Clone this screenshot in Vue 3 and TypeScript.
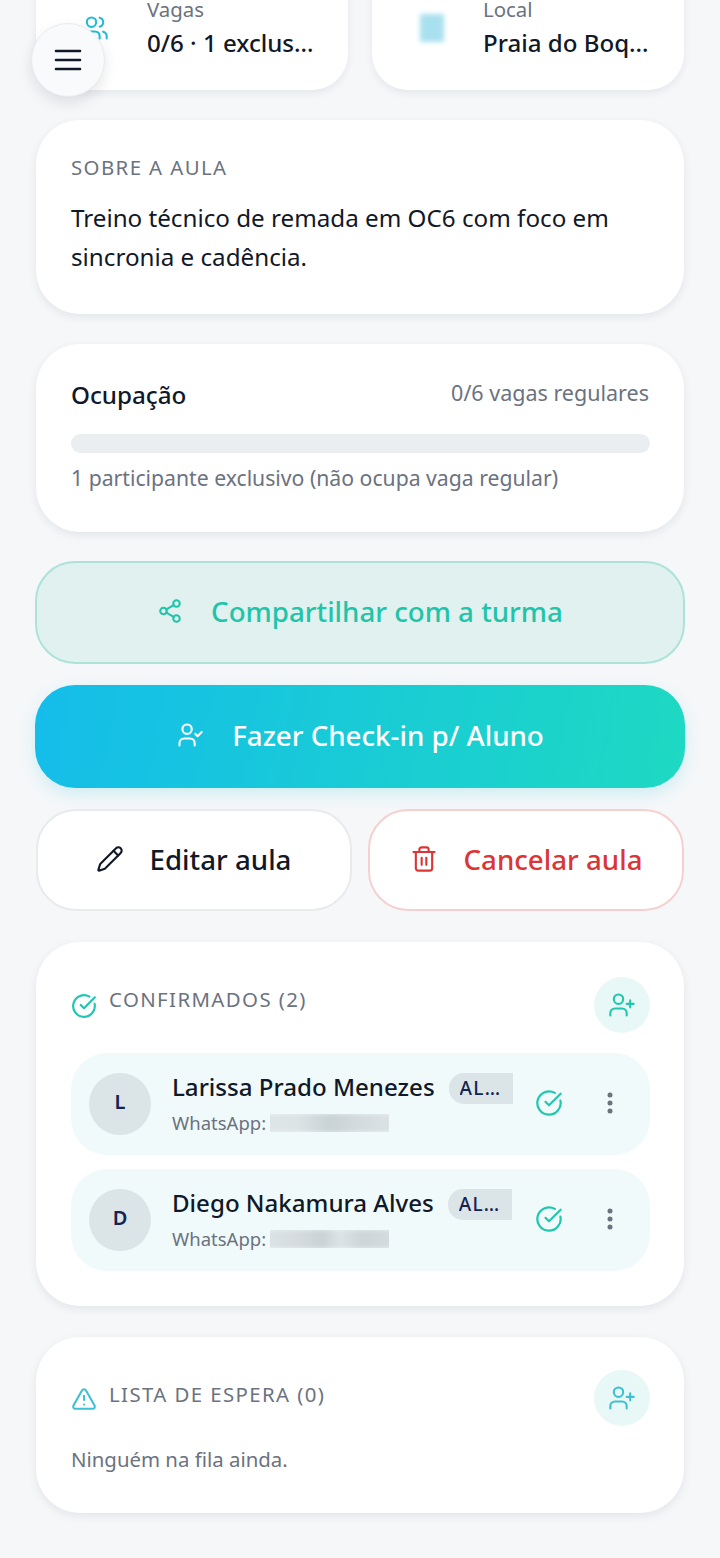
<script setup lang="ts">
interface Person { initial: string; name: string; blur: string }
const people: Person[] = [
  { initial: 'L', name: 'Larissa Prado Menezes', blur: 'linear-gradient(90deg,#dfe6e8 0%,#dde4e6 25%,#c9d2d5 50%,#d3dadd 70%,#dde4e6 100%)' },
  { initial: 'D', name: 'Diego Nakamura Alves', blur: 'linear-gradient(90deg,#dde4e6 0%,#d3dadd 30%,#c9d2d5 45%,#dde4e6 58%,#cdd5d8 75%,#d6dde0 100%)' },
]
</script>

<template>
  <div class="page">
    <button class="menu" aria-label="Menu">
      <svg width="28" height="28" viewBox="0 0 28 28" fill="none" stroke="#111827" stroke-width="2.6" stroke-linecap="round">
        <path d="M2 5h24M2 14h24M2 23h24" />
      </svg>
    </button>

    <div class="stats">
      <div class="stat">
        <div class="stat-icon">
          <svg width="28" height="28" viewBox="0 0 24 24" fill="none" stroke="#22bcd8" stroke-width="1.8" stroke-linecap="round" stroke-linejoin="round">
            <path d="M16 21v-2a4 4 0 0 0-4-4H6a4 4 0 0 0-4 4v2" />
            <circle cx="9" cy="7" r="4" />
            <path d="M22 21v-2a4 4 0 0 0-3-3.87" />
            <path d="M16 3.13a4 4 0 0 1 0 7.75" />
          </svg>
        </div>
        <div class="stat-text">
          <div class="stat-label">Vagas</div>
          <div class="stat-value">0/6 · 1 exclusivo</div>
        </div>
      </div>
      <div class="stat">
        <div class="stat-icon"><span class="thumb"></span></div>
        <div class="stat-text">
          <div class="stat-label">Local</div>
          <div class="stat-value">Praia do Boqueirão</div>
        </div>
      </div>
    </div>

    <section class="card about">
      <h2 class="eyebrow">SOBRE A AULA</h2>
      <p class="about-text">Treino técnico de remada em OC6 com foco em sincronia e cadência.</p>
    </section>

    <section class="card occupancy">
      <div class="occ-head">
        <span class="occ-title">Ocupação</span>
        <span class="occ-count">0/6 vagas regulares</span>
      </div>
      <div class="track"></div>
      <p class="occ-note">1 participante exclusivo (não ocupa vaga regular)</p>
    </section>

    <button class="btn share">
      <svg width="26" height="26" viewBox="0 0 24 24" fill="none" stroke="currentColor" stroke-width="1.9" stroke-linecap="round" stroke-linejoin="round">
        <circle cx="18" cy="5" r="3" /><circle cx="6" cy="12" r="3" /><circle cx="18" cy="19" r="3" />
        <path d="m8.59 13.51 6.83 3.98M15.41 6.51l-6.82 3.98" />
      </svg>
      <span>Compartilhar com a turma</span>
    </button>

    <button class="btn checkin">
      <svg width="28" height="28" viewBox="0 0 24 24" fill="none" stroke="currentColor" stroke-width="1.8" stroke-linecap="round" stroke-linejoin="round">
        <path d="M16 21v-2a4 4 0 0 0-4-4H7a4 4 0 0 0-4 4v2" /><circle cx="9.5" cy="7" r="4" /><path d="m16.5 11 2 2 3.5-3.5" />
      </svg>
      <span>Fazer Check-in p/ Aluno</span>
    </button>

    <div class="btn-row">
      <button class="btn edit">
        <svg width="28" height="28" viewBox="0 0 24 24" fill="none" stroke="currentColor" stroke-width="1.8" stroke-linecap="round" stroke-linejoin="round">
          <path d="M21.17 6.81a2.82 2.82 0 0 0-3.99-3.99L3.84 16.17a2 2 0 0 0-.5.83l-1.32 4.35a.5.5 0 0 0 .62.62l4.35-1.32a2 2 0 0 0 .83-.5z" /><path d="m15 5 4 4" />
        </svg>
        <span>Editar aula</span>
      </button>
      <button class="btn cancel">
        <svg width="28" height="28" viewBox="0 0 24 24" fill="none" stroke="currentColor" stroke-width="1.8" stroke-linecap="round" stroke-linejoin="round">
          <path d="M3 6h18M19 6v14a2 2 0 0 1-2 2H7a2 2 0 0 1-2-2V6M8 6V4a2 2 0 0 1 2-2h4a2 2 0 0 1 2 2v2M10 11v6M14 11v6" />
        </svg>
        <span>Cancelar aula</span>
      </button>
    </div>

    <section class="card confirmed">
      <div class="list-head">
        <svg class="head-icon" width="26" height="26" viewBox="0 0 24 24" fill="none" stroke="#1fc7ae" stroke-width="2" stroke-linecap="round" stroke-linejoin="round">
          <path d="M21.8 10A10 10 0 1 1 17 3.34" /><path d="m9 11 3 3L22 4" />
        </svg>
        <h2 class="eyebrow inline">CONFIRMADOS (2)</h2>
        <button class="add" aria-label="Adicionar">
          <svg width="28" height="28" viewBox="0 0 24 24" fill="none" stroke="#1fc7ae" stroke-width="1.8" stroke-linecap="round" stroke-linejoin="round">
            <path d="M16 21v-2a4 4 0 0 0-4-4H6a4 4 0 0 0-4 4v2" /><circle cx="9" cy="7" r="4" /><path d="M19 8v6M22 11h-6" />
          </svg>
        </button>
      </div>
      <div class="people">
        <div v-for="p in people" :key="p.initial" class="person">
          <div class="avatar">{{ p.initial }}</div>
          <div class="person-main">
            <div class="name-line">
              <span class="name">{{ p.name }}</span>
              <span class="tag"><span class="tag-in">ALUNO</span></span>
            </div>
            <div class="phone">
              <span>WhatsApp:</span>
              <span class="phone-clip"><span class="phone-blur" :style="{ background: p.blur }"></span></span>
            </div>
          </div>
          <svg class="check" width="28" height="28" viewBox="0 0 24 24" fill="none" stroke="#1fc7ae" stroke-width="1.9" stroke-linecap="round" stroke-linejoin="round">
            <path d="M21.8 10A10 10 0 1 1 17 3.34" /><path d="m9 11 3 3L22 4" />
          </svg>
          <svg class="more" width="6" height="22" viewBox="0 0 6 22" fill="#6b7280">
            <circle cx="3" cy="3" r="2.5" /><circle cx="3" cy="11" r="2.5" /><circle cx="3" cy="19" r="2.5" />
          </svg>
        </div>
      </div>
    </section>

    <section class="card waiting">
      <div class="list-head">
        <svg class="head-icon" width="26" height="26" viewBox="0 0 24 24" fill="none" stroke="#3cc0d2" stroke-width="1.9" stroke-linecap="round" stroke-linejoin="round">
          <path d="m21.73 18-8-14a2 2 0 0 0-3.48 0l-8 14A2 2 0 0 0 4 21h16a2 2 0 0 0 1.73-3" /><path d="M12 9v4M12 17h.01" />
        </svg>
        <h2 class="eyebrow inline">LISTA DE ESPERA (0)</h2>
        <button class="add" aria-label="Adicionar">
          <svg width="28" height="28" viewBox="0 0 24 24" fill="none" stroke="#3cc0d2" stroke-width="1.8" stroke-linecap="round" stroke-linejoin="round">
            <path d="M16 21v-2a4 4 0 0 0-4-4H6a4 4 0 0 0-4 4v2" /><circle cx="9" cy="7" r="4" /><path d="M19 8v6M22 11h-6" />
          </svg>
        </button>
      </div>
      <p class="empty">Ninguém na fila ainda.</p>
    </section>
  </div>
</template>

<style>
html, body { margin: 0; background: #f5f7f9; }
</style>

<style scoped>
* { box-sizing: border-box; }
.page {
  position: relative;
  width: 720px;
  height: 1558px;
  overflow: hidden;
  padding: 0 36px;
  background: #f5f7f9;
  font-family: "Noto Sans", sans-serif;
  color: #111827;
}
.menu {
  position: absolute;
  z-index: 1;
  left: 31px;
  top: 23px;
  width: 74px;
  height: 74px;
  border-radius: 50%;
  border: 1px solid #e8ebef;
  background: #f8fafb;
  box-shadow: 0 6px 14px rgba(17, 24, 39, .1);
  display: flex;
  align-items: center;
  justify-content: center;
  padding: 0;
}
.stats {
  display: grid;
  grid-template-columns: 312px 312px;
  grid-template-rows: 102px;
  gap: 24px;
  margin-top: -12px;
}
.stat {
  display: flex;
  align-items: flex-end;
  background: #fff;
  border-radius: 0 0 36px 36px;
  box-shadow: 0 3px 8px rgba(17, 24, 39, .07);
  padding: 0 33px 32px 36px;
  min-width: 0;
}
.stat-icon {
  width: 48px;
  margin-right: 27px;
  flex: none;
  display: flex;
  justify-content: center;
  align-self: flex-start;
  padding-top: 26px;
}
.stat:first-child .stat-icon svg { margin-left: -3px; }
.thumb {
  display: block;
  width: 24px;
  height: 28px;
  background: #a9e0ef;
  filter: blur(2.5px);
}
.stat-text { min-width: 0; flex: 1; }
.stat-label {
  font-size: 20.4px;
  line-height: 22px;
  color: #6b7280;
  margin-bottom: 8px;
}
.stat-value {
  font-size: 24.1px;
  line-height: 30px;
  font-weight: 500;
  white-space: nowrap;
  overflow: hidden;
  text-overflow: ellipsis;
}
.card {
  background: #fff;
  border-radius: 44px;
  box-shadow: 0 3px 10px rgba(17, 24, 39, .08);
  padding: 0 34px 0 35px;
}
.about { margin-top: 30px; height: 194px; padding-top: 33px; }
.eyebrow {
  margin: 0;
  font-size: 20.4px;
  line-height: 28px;
  font-weight: 450;
  letter-spacing: 1.4px;
  color: #6b7280;
}
.about-text {
  margin: 17px 0 0;
  font-size: 24.2px;
  line-height: 39px;
  color: #111827;
}
.occupancy { margin-top: 30px; height: 188px; padding-top: 33px; }
.occ-head { display: flex; justify-content: space-between; align-items: flex-start; }
.occ-title { font-size: 24.2px; line-height: 36px; font-weight: 500; }
.occ-count { font-size: 21.5px; line-height: 32px; color: #6b7280; margin-right: 1px; }
.track { margin-top: 21px; height: 19px; border-radius: 10px; background: #eaeef0; }
.occ-note { margin: 10px 0 0; font-size: 21.2px; line-height: 30px; color: #6b7280; }
.btn {
  display: flex;
  align-items: center;
  justify-content: center;
  gap: 28px;
  width: 100%;
  border-radius: 40px;
  font-family: inherit;
  font-size: 27.7px;
  font-weight: 500;
  padding: 0 0 3px;
}
.share {
  width: 650px;
  margin: 29px -1px 0;
  height: 103px;
  background: #e0f1ef;
  border: 2px solid #ace3d9;
  color: #1fc4a9;
}
.checkin {
  width: 650px;
  margin: 21px -1px 0;
  height: 103px;
  border: 0;
  color: #fff;
  background: linear-gradient(100deg, #14bdea 0%, #1ed9c2 100%);
  box-shadow: 0 6px 16px rgba(30, 200, 215, .18);
}
.btn-row { display: grid; grid-template-columns: 316px 316px; gap: 16px; margin-top: 21px; }
.edit, .cancel { height: 102px; background: #fff; gap: 26px; }
.edit { border: 2px solid #e8eaee; color: #111827; padding-left: 3px; }
.edit svg { margin-left: -4px; }
.cancel { border: 2px solid #f6d0d0; color: #dc3535; }
.confirmed { margin-top: 31px; height: 364px; padding-top: 35px; }
.list-head { display: flex; align-items: center; height: 56px; }
.head-icon { flex: none; margin-right: 12px; }
.confirmed .head-icon { margin-top: 2px; }
.confirmed .eyebrow.inline { margin-bottom: 12px; }
.waiting .head-icon { margin-top: 2px; }
.waiting .eyebrow.inline { margin-bottom: 8px; }
.eyebrow.inline { flex: 1; }
.add {
  width: 56px;
  height: 56px;
  flex: none;
  border: 0;
  padding: 0;
  border-radius: 50%;
  background: #e8f8f6;
  display: flex;
  align-items: center;
  justify-content: center;
}
.people { margin-top: 20px; display: flex; flex-direction: column; gap: 14px; }
.person {
  display: flex;
  align-items: center;
  height: 102px;
  padding: 0 37px 0 18px;
  border-radius: 36px;
  background: #f0fafa;
}
.avatar {
  width: 62px;
  height: 62px;
  flex: none;
  border-radius: 50%;
  background: #dbe4e7;
  color: #14234f;
  display: flex;
  align-items: center;
  justify-content: center;
  font-size: 20px;
  font-weight: 600;
  margin-right: 21px;
  padding-bottom: 5px;
}
.person-main { flex: 1; min-width: 0; }
.name-line { display: flex; align-items: center; gap: 14px; height: 32px; }
.name { font-size: 24.1px; line-height: 32px; font-weight: 500; white-space: nowrap; color: #111827; margin-top: -2px; }
.tag {
  width: 64px;
  height: 31px;
  flex: none;
  background: #dbe4e7;
  border-radius: 15px 0 0 15px;
  padding: 0 10px 0 11px;
  margin-top: 1px;
  display: flex;
  align-items: center;
  overflow: hidden;
}
.tag-in {
  display: block;
  width: 100%;
  font-size: 19px;
  font-weight: 500;
  letter-spacing: 1.3px;
  color: #14234f;
  white-space: nowrap;
  overflow: hidden;
  text-overflow: ellipsis;
}
.phone {
  display: flex;
  align-items: center;
  gap: 4px;
  margin-top: 5px;
  height: 28px;
  font-size: 18.5px;
  color: #6b7280;
}
.phone-clip { display: block; width: 119px; height: 18px; overflow: hidden; }
.phone-blur { display: block; width: 100%; height: 100%; filter: blur(2px); transform: scale(1.1); }
.check { flex: none; margin: 0 0 2px 10px; }
.more { flex: none; margin: 0 0 2px 44px; }
.waiting { margin-top: 31px; height: 176px; padding-top: 33px; }
.empty { margin: 18px 0 0; font-size: 20.4px; line-height: 30px; color: #6b7280; }
</style>
